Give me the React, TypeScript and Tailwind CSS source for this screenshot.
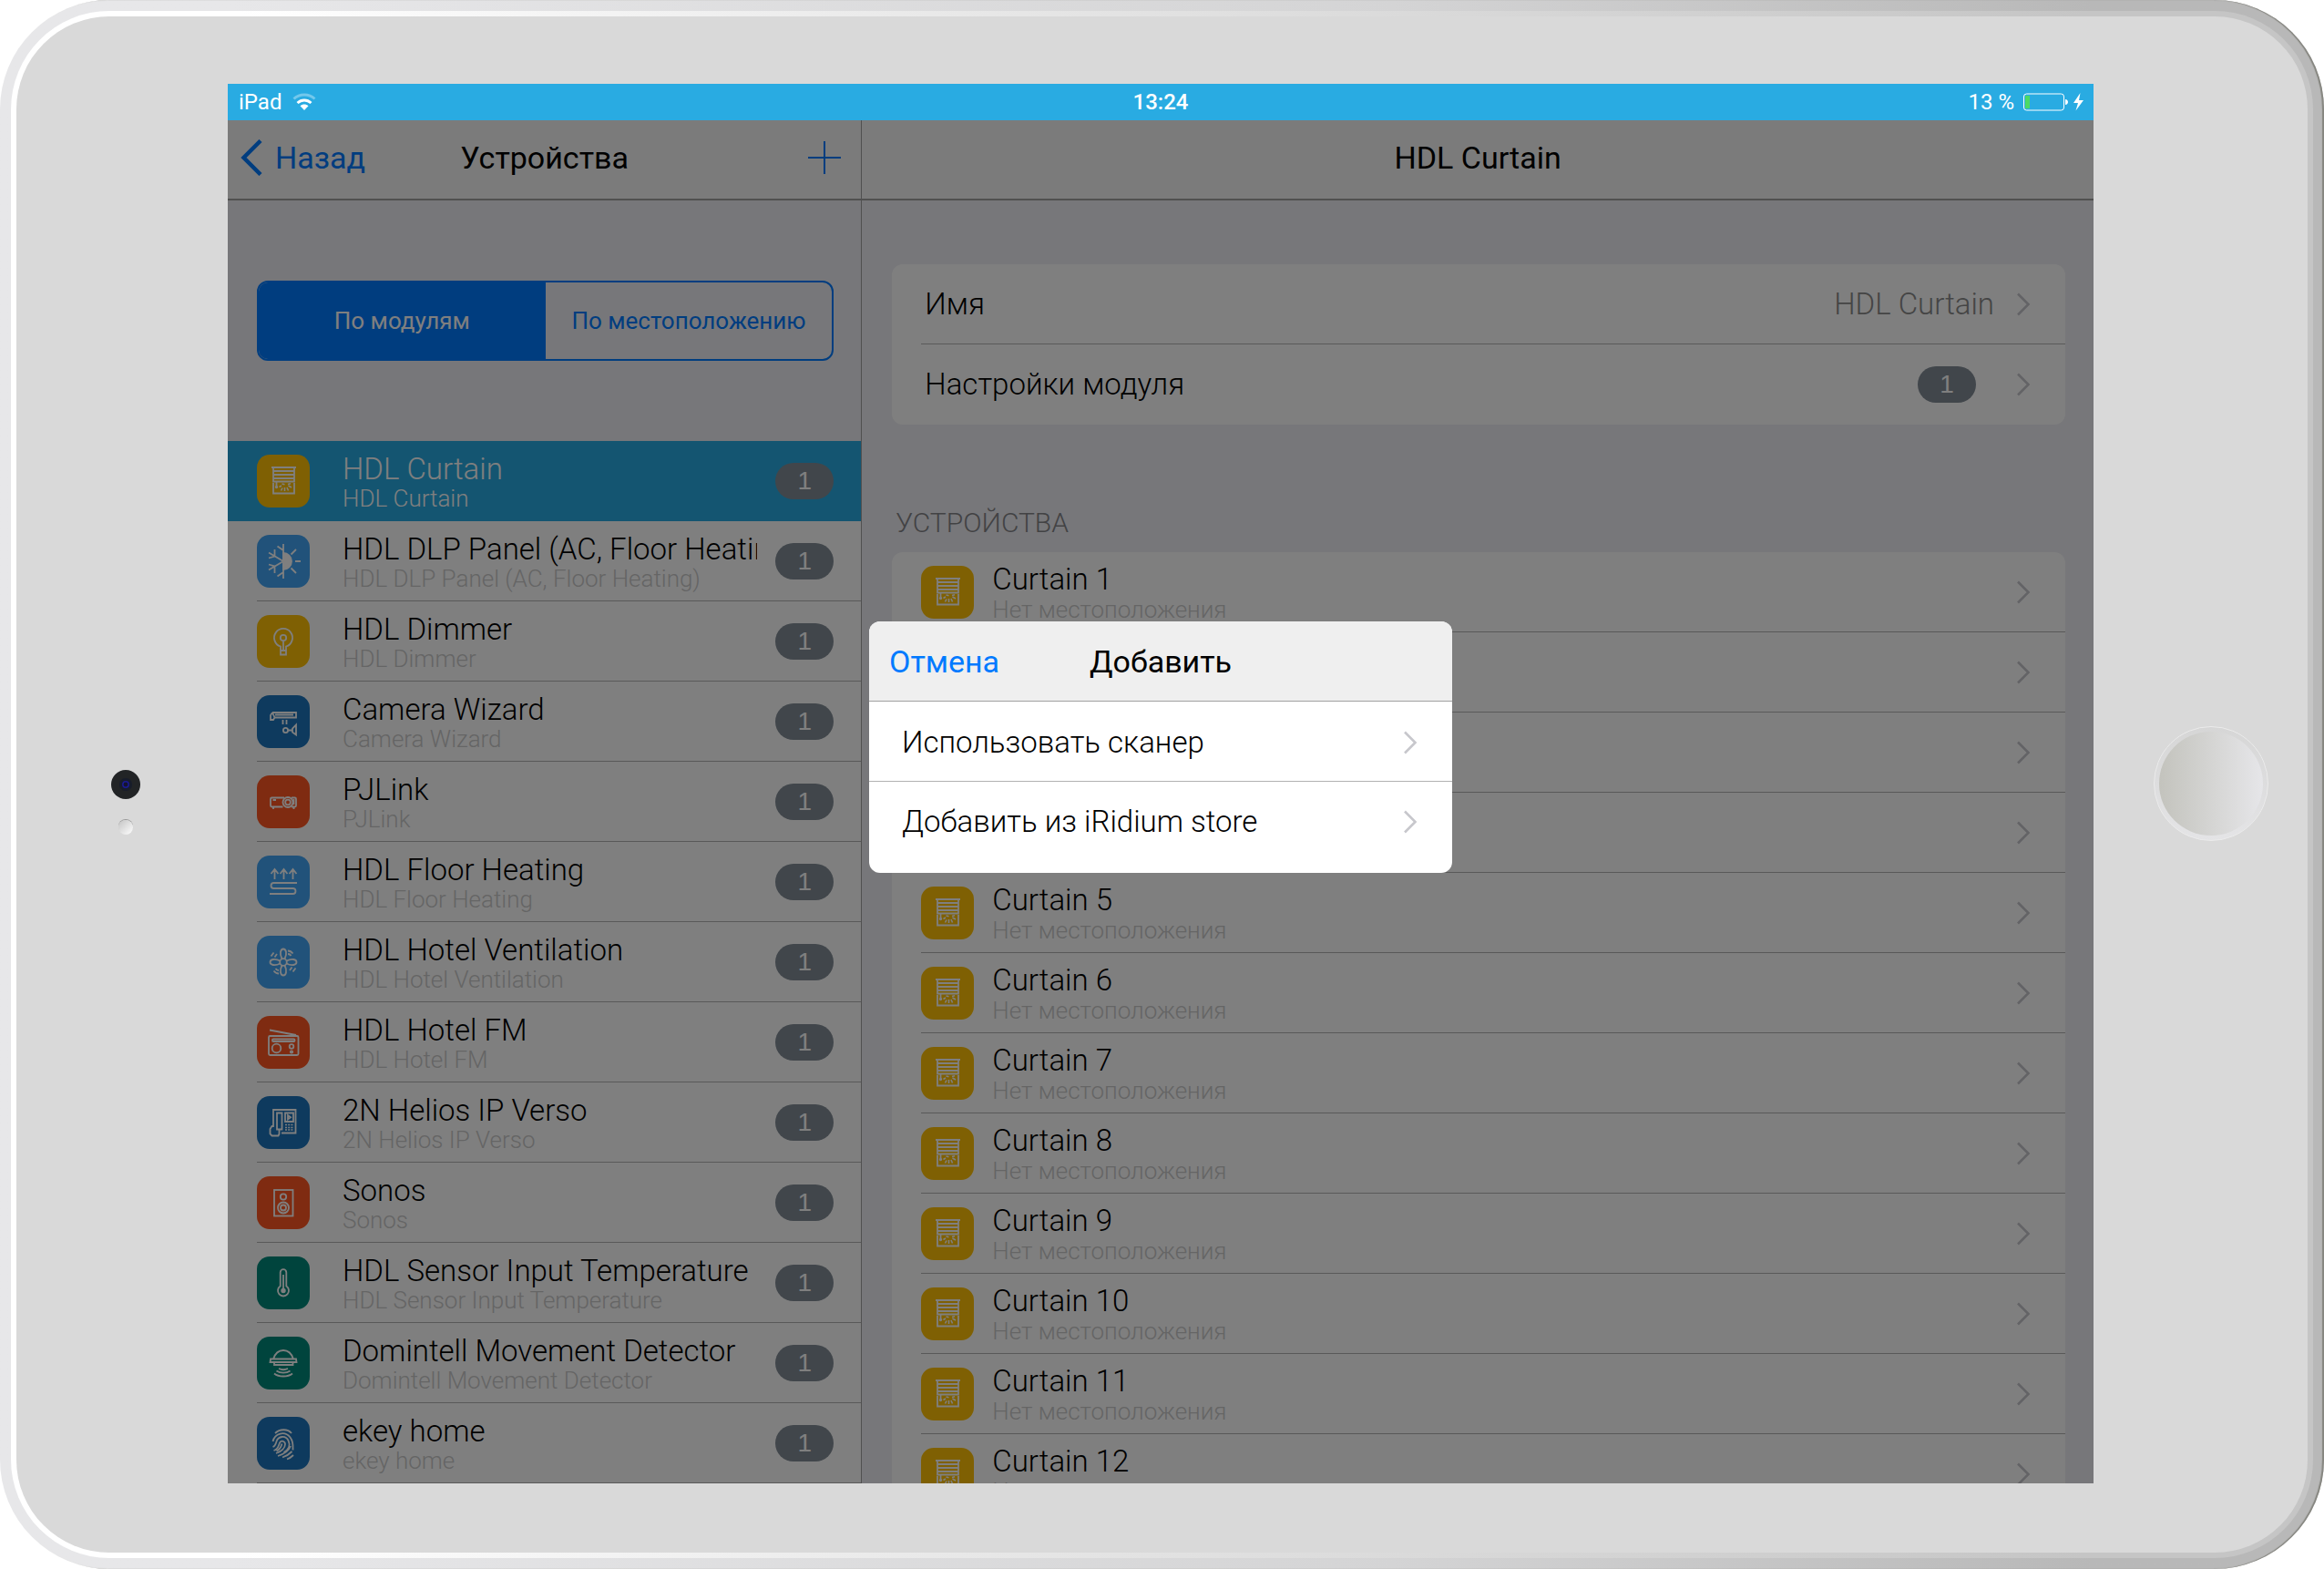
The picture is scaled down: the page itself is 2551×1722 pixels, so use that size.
import React from 'react';

type IconName =
  | 'curtain'
  | 'climate'
  | 'bulb'
  | 'camera'
  | 'projector'
  | 'floor'
  | 'fan'
  | 'radio'
  | 'intercom'
  | 'speaker'
  | 'thermometer'
  | 'motion'
  | 'finger';

interface Module {
  name: string;
  icon: IconName;
  color: string;
}

const modules: Module[] = [
  { name: 'HDL Curtain', icon: 'curtain', color: 'bg-[#ffc107]' },
  { name: 'HDL DLP Panel (AC, Floor Heating)', icon: 'climate', color: 'bg-[#42a5f5]' },
  { name: 'HDL Dimmer', icon: 'bulb', color: 'bg-[#ffc107]' },
  { name: 'Camera Wizard', icon: 'camera', color: 'bg-[#1c75bc]' },
  { name: 'PJLink', icon: 'projector', color: 'bg-[#ff5722]' },
  { name: 'HDL Floor Heating', icon: 'floor', color: 'bg-[#42a5f5]' },
  { name: 'HDL Hotel Ventilation', icon: 'fan', color: 'bg-[#42a5f5]' },
  { name: 'HDL Hotel FM', icon: 'radio', color: 'bg-[#ff5722]' },
  { name: '2N Helios IP Verso', icon: 'intercom', color: 'bg-[#1c75bc]' },
  { name: 'Sonos', icon: 'speaker', color: 'bg-[#ff5722]' },
  { name: 'HDL Sensor Input Temperature', icon: 'thermometer', color: 'bg-[#00897b]' },
  { name: 'Domintell Movement Detector', icon: 'motion', color: 'bg-[#00897b]' },
  { name: 'ekey home', icon: 'finger', color: 'bg-[#1c75bc]' },
];

const curtains = Array.from({ length: 12 }, (_, i) => `Curtain ${i + 1}`);

const glyphs: Record<IconName, React.ReactNode> = {
  curtain: (
    <>
      <path d="M16 14h27M18 14v4h23v-4M18 19v3h23v-3M18 23v3h23v-3M18 27v2.5h23V27M18 31v11.5h23V31M21.5 29v5" />
      <circle cx="21.5" cy="35.5" r=".8" />
      <path d="M24.500 35.500l2.500-1.500M26.500 39.500l1.500-3M30.500 36v4M33 36l1.500 3.500M34.500 34l3.500 2M27.500 32l3 .8M34 32.500l3-.7" strokeWidth="1.600" />
    </>
  ),
  climate: (
    <>
      <path d="M29 10v38M13 19.500L29 29 13 38.500M19.500 16v7.500L13 25.500M19.500 42v-7.500L13 32.500M22.500 12.500L29 17M22.500 45.500L29 41M42 29h6M37.500 21.500l5.500-5.500M37.500 36.500l5.500 5.500" />
      <path d="M29 20a9 9 0 0 1 0 18z" fill="currentColor" />
    </>
  ),
  bulb: (
    <>
      <path d="M26 43.500v-9A10 10 0 1 1 32 34.500v9zM26 39h6M29 28.500V38" />
      <circle cx="29" cy="25" r="3.200" />
    </>
  ),
  camera: (
    <>
      <path d="M17 19h26v5.500H19.500M17 19l-2 3v5h3l1.500-2.500L17 19M20 21.500h20M28.500 27v5M32.500 27v5M34.500 38.500h4.500M43 32.500v11l-4-3v-4z" />
      <circle cx="31.500" cy="38.500" r="2.600" />
    </>
  ),
  projector: (
    <>
      <path d="M28.500 34.500H16.500a1.500 1.500 0 0 1-1.500-1.500v-7a1.500 1.500 0 0 1 1.500-1.500H30M38 24.500h3.500A1.500 1.500 0 0 1 43 26v7a1.500 1.500 0 0 1-1.500 1.500H38M17.500 27h3.500M18 35v2M40.500 35v2M40.500 26v6" />
      <circle cx="34" cy="29.500" r="5.500" />
      <circle cx="34" cy="29.500" r="2.800" />
    </>
  ),
  floor: (
    <path d="M19.500 26V15M15.500 20l4-5 4 5M29.500 26V15M25.500 20l4-5 4 5M39.500 26V15M35.500 20l4-5 4 5M44 30H18.500a3 3 0 0 0 0 6H39.500a3 3 0 0 1 0 6H14" />
  ),
  fan: (
    <>
      <circle cx="29" cy="29" r="3.800" />
      <path d="M27.500 25.500c-3-6-1.500-11 1.500-11s4.500 5 1.500 11M27.500 32.500c-3 6-1.500 11 1.500 11s4.500-5 1.500-11M25.500 27.500c-6-3-11-1.500-11 1.500s5 4.500 11 1.500M32.500 27.500c6-3 11-1.500 11 1.500s-5 4.500-11 1.500" />
      <path d="M15.500 22.500l3-4M19.500 23.500l2.500-3.500M34 16.500c2 0 4 1 5.500 3M34 20c1.500 0 3 1 3.500 2M42.500 35.500l-3 4M38.500 34.500L36 38M24 41.500c-2 0-4-1-5.500-3M24 38c-1.500 0-2.500-.5-3.500-2" />
    </>
  ),
  radio: (
    <>
      <rect x="13" y="22" width="32.500" height="21" rx="1.500" />
      <rect x="17" y="25.500" width="24.500" height="2.500" rx="1" />
      <path d="M14 15.500L43 21" />
      <circle cx="21.500" cy="35.500" r="4.800" />
      <circle cx="38" cy="33.500" r="2.300" />
      <circle cx="38" cy="39.500" r="1.200" />
    </>
  ),
  intercom: (
    <>
      <path d="M18 34V15h24.500v25.500H27M22 18.500h5.500v18H22zM31 18.500h9v9.500h-9zM34 21v4.500l3-2.200zM18 33h-1.500l-2 3v5.500l2 2h7l1-2V37" />
      <path d="M31 31.500h8.500M31 34.500h8.500M31 37h8.500" strokeDasharray="2 1.200" strokeWidth="1.500" />
    </>
  ),
  speaker: (
    <>
      <rect x="19" y="15" width="20.500" height="28.500" />
      <circle cx="29" cy="22.500" r="3.200" />
      <circle cx="29" cy="34.500" r="6" />
      <circle cx="29" cy="34.500" r="3" />
    </>
  ),
  thermometer: (
    <>
      <path d="M25.700 32.500V17.500a3.300 3.300 0 0 1 6.600 0v15a6 6 0 1 1-6.600 0zM29 20v17" />
      <circle cx="29" cy="37.500" r="1.800" fill="currentColor" />
    </>
  ),
  motion: (
    <path d="M18 24.500c2-6 6-9.500 11-9.500s9 3.500 11 9.500M15 24.500h28l.500 3.500h-29zM19 28v3h20.500v-3M24 35c3 1.500 7 1.500 10 0M21.500 37.500c4 2.800 11 2.800 15 0M19 40.500c5 4 15 4 20 0" />
  ),
  finger: (
    <path d="M20 18c5-5 14-5 18 0M17.500 27c2-9 13-12 19-4.500 4 5 3 12 3 14M17.500 33c3-1 3-3 4-6 2-6 10-7 13-1 2.500 5 0 10-5 13M18.500 37c5-1.500 5-5 6.500-8.500 2-3.500 6-1.500 6 1.500 0 4-4 8-10 10M23 43c6-2 12-5.500 14-11M28 44.500c5-1.500 8-4 10.500-6.500M33 46.500c3-1 5-2.500 7-4.500M21.500 37.500c3-1.500 5-4 6-8" />
  ),
};

const ModuleIcon: React.FC<{ icon: IconName; color: string }> = ({ icon, color }) => (
  <span className={`block size-[58px] shrink-0 rounded-[14px] text-white ${color}`}>
    <svg viewBox="0 0 58 58" className="size-full" fill="none" stroke="currentColor" strokeWidth="1.8">
      {glyphs[icon]}
    </svg>
  </span>
);

const Chevron: React.FC = () => (
  <svg viewBox="0 0 16 26" className="h-[26px] w-4 shrink-0" fill="none" stroke="#c7c7cc" strokeWidth="2.6">
    <path d="M2 1.500L13.500 13 2 24.500" />
  </svg>
);

const Badge: React.FC = () => (
  <span className="flex h-10 w-16 shrink-0 items-center justify-center rounded-full bg-[#828c96] font-['Liberation_Sans',sans-serif] text-[28px] font-normal text-white">
    1
  </span>
);

const StatusBar: React.FC = () => (
  <div className="grid h-10 shrink-0 grid-cols-3 items-center bg-[#29abe2] px-3 text-2xl text-white">
    <div className="flex items-center gap-3">
      <span>iPad</span>
      <svg viewBox="0 0 26 20" className="h-5 w-[26px]" fill="none" stroke="#fff" strokeWidth="3">
        <path d="M1.500 6.500C8 .5 18 .5 24.500 6.500" opacity=".35" />
        <path d="M5.500 11C10 7 16 7 20.500 11" />
        <path d="M8.500 14.200c2.500-2.200 6.500-2.200 9 0L13 19z" fill="#fff" stroke="none" />
      </svg>
    </div>
    <span className="text-center font-medium">13:24</span>
    <div className="-mr-0.5 flex items-center justify-end gap-2.5">
      <span>13 %</span>
      <svg viewBox="0 0 67 20" className="h-5 w-[67px]">
        <rect x=".5" y="1" width="44" height="18" rx="3" fill="none" stroke="#fff" />
        <rect x="2" y="3" width="5" height="14" fill="#4cd964" />
        <path d="M46 7c4 0 4 6 0 6z" fill="#fff" />
        <path d="M62.500 0L55 11h5l-2.500 8.500L66 8h-5z" fill="#fff" />
      </svg>
    </div>
  </div>
);

const Sidebar: React.FC = () => (
  <aside className="flex w-[34%] shrink-0 flex-col border-r border-[#a0a0a0] bg-[#efeff4]">
    <header className="grid h-[88px] shrink-0 grid-cols-[1fr_auto_1fr] items-center border-b-2 border-[#a0a0a0] bg-[#f7f7f7] px-3.5 pb-1 text-[34px]">
      <button className="flex items-center gap-3.5 text-[#007aff]">
        <svg viewBox="0 0 24 40" className="h-10 w-6" fill="none" stroke="currentColor" strokeWidth="4.500">
          <path d="M22 1.500L3.500 20 22 38.500" />
        </svg>
        Назад
      </button>
      <h1>Устройства</h1>
      <button aria-label="+" className="justify-self-end pr-2 text-[#007aff]">
        <svg viewBox="0 0 36 36" className="size-9" stroke="currentColor" strokeWidth="2">
          <path d="M18 0v36M0 18h36" />
        </svg>
      </button>
    </header>

    <div className="shrink-0 py-[88px] pr-[30px] pl-8">
      <div className="flex h-[88px] overflow-hidden rounded-xl border-2 border-[#007aff] text-[26px]">
        <button className="flex-1 bg-[#007aff] text-white">По модулям</button>
        <button className="flex-1 text-[#007aff]">По местоположению</button>
      </div>
    </div>

    <ul className="bg-white">
      {modules.map((m, i) => (
        <li key={m.name} className={i === 0 ? 'bg-[#29abe2] pl-8 text-white' : 'pl-8'}>
          <button
            className={`flex h-[88px] w-full items-center border-b pr-[30px] text-left ${i === 0 ? 'border-[#29abe2]' : 'border-[#b2b2b2]'}`}
          >
            <ModuleIcon icon={m.icon} color={m.color} />
            <span className="ml-9 min-w-0 flex-1 overflow-x-clip font-light whitespace-nowrap">
              <span className="block text-[33px] leading-[38px]">{m.name}</span>
              <span className={`block text-[26px] leading-[26px] ${i === 0 ? '' : 'text-[#cacaca]'}`}>{m.name}</span>
            </span>
            <span className="pl-5">
              <Badge />
            </span>
          </button>
        </li>
      ))}
    </ul>
  </aside>
);

const Details: React.FC = () => (
  <main className="flex min-w-0 flex-1 flex-col overflow-hidden bg-[#efeff4]">
    <header className="flex h-[88px] shrink-0 items-center justify-center border-b-2 border-[#a0a0a0] bg-[#f7f7f7] pb-1 text-[34px]">
      <h2>HDL Curtain</h2>
    </header>

    <div className="pt-[70px] pr-[31px] pl-[33px]">
      <div className="rounded-xl bg-white pl-8 text-[33px] font-light">
        <button className="flex h-[88px] w-full items-center gap-6 border-b border-[#b2b2b2] pr-[38px] pl-1 text-left">
          <span className="flex-1">Имя</span>
          <span className="text-[#8a8a8a]">HDL Curtain</span>
          <Chevron />
        </button>
        <button className="flex h-[88px] w-full items-center gap-11 pr-[38px] pl-1 text-left">
          <span className="flex-1">Настройки модуля</span>
          <Badge />
          <Chevron />
        </button>
      </div>

      <h3 className="px-1 pt-[88px] pb-3 text-[30px] leading-10 font-light text-[#858589]">УСТРОЙСТВА</h3>

      <ul className="rounded-t-xl bg-white pl-8">
        {curtains.map((name) => (
          <li key={name}>
            <button className="flex h-[88px] w-full items-center gap-5 border-b border-[#b2b2b2] pt-px pr-[38px] text-left font-light">
              <ModuleIcon icon="curtain" color="bg-[#ffc107]" />
              <span className="flex-1">
                <span className="block text-[33px] leading-[38px]">{name}</span>
                <span className="block text-[26px] leading-7 text-[#cacaca]">Нет местоположения</span>
              </span>
              <Chevron />
            </button>
          </li>
        ))}
      </ul>
    </div>
  </main>
);

const AddDialog: React.FC = () => (
  <div className="absolute inset-0 flex items-start justify-center bg-black/50 pt-[550px]">
    <div role="dialog" aria-labelledby="add-title" className="w-[640px] overflow-hidden rounded-xl bg-white pb-3">
      <header className="grid h-[88px] grid-cols-[1fr_auto_1fr] items-center border-b border-[#a0a0a0] bg-[#efefef] px-[22px] pt-0.5 text-[34px]">
        <button className="justify-self-start text-[#007aff]">Отмена</button>
        <h2 id="add-title">Добавить</h2>
      </header>
      <button className="flex h-[88px] w-full items-center justify-between border-b border-[#b2b2b2] pt-0.5 pr-[38px] pl-9 text-[33px] font-light">
        Использовать сканер
        <Chevron />
      </button>
      <button className="flex h-[88px] w-full items-center justify-between pr-[38px] pl-9 text-[33px] font-light">
        Добавить из iRidium store
        <Chevron />
      </button>
    </div>
  </div>
);

export default function App() {
  return (
    <div className="h-screen overflow-hidden bg-white font-[Roboto,'Liberation_Sans',sans-serif] text-black">
      {/* tablet shell: outer rim, bright bevel, bezel */}
      <div className="h-full rounded-[120px] bg-linear-to-r from-[#e7e7e9] from-10% via-[#d4d4d5] via-60% to-[#b8b8b8] to-90% p-3 shadow-[inset_-2px_0_1px_#85857f]">
        <div className="h-full rounded-[108px] bg-linear-to-r from-white from-10% to-[#c5c5c5] to-90% p-1.5">
          <div className="flex h-full items-stretch rounded-[102px] bg-[#d9d9d9] pt-[74px] pb-[76px]">
            <div className="flex w-[232px] shrink-0 flex-col items-center justify-center gap-[23px] pt-10 pl-2">
              <svg viewBox="0 0 32 32" className="size-8">
                <circle cx="16" cy="16" r="16" fill="#222426" />
                <circle cx="16" cy="16" r="7" fill="#171c2c" />
                <circle cx="16" cy="16" r="3.200" fill="#14142e" stroke="#1a1a94" strokeWidth="1.500" />
              </svg>
              <span className="size-4 rounded-full bg-linear-to-br from-[#c4c4c4] to-white shadow-[0_-1px_0_#999]" />
            </div>

            <div className="flex min-w-0 flex-1 flex-col overflow-hidden">
              <StatusBar />
              <div className="relative flex min-h-0 flex-1 overflow-hidden">
                <Sidebar />
                <Details />
                <AddDialog />
              </div>
            </div>

            <div className="flex w-[235px] shrink-0 items-center justify-center pl-[22px]">
              <div className="rounded-full border border-[#ebebeb] bg-linear-to-b from-[#d6d6d6] to-[#e4e4e6] p-[5px]">
                <div className="size-[114px] rounded-full bg-linear-to-r from-[#c3c3bd] to-[#e6e6e9]" />
              </div>
            </div>
          </div>
        </div>
      </div>
    </div>
  );
}
